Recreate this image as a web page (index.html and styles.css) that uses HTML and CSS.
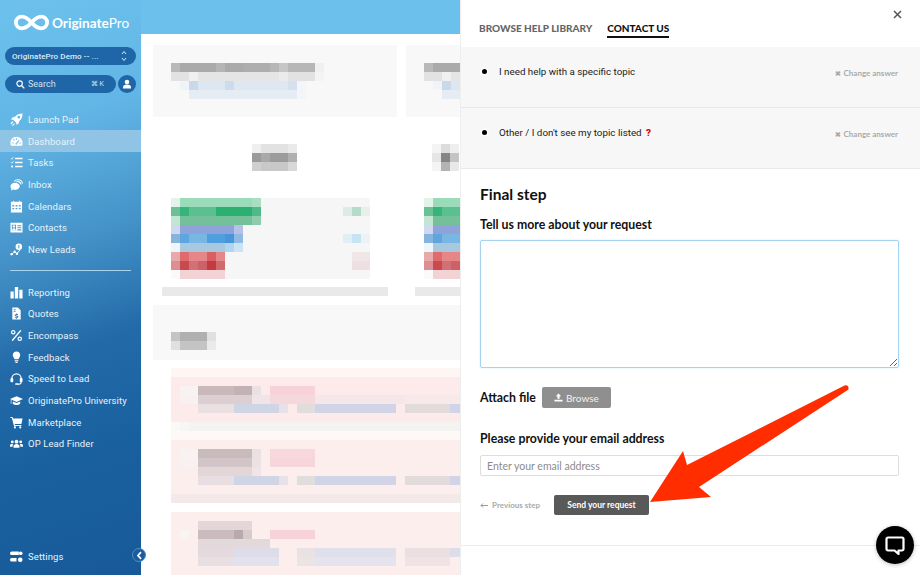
FILE: index.html
```html
<!DOCTYPE html>
<html lang="en">
<head>
<meta charset="utf-8">
<title>OriginatePro</title>
<link rel="stylesheet" href="styles.css">
</head>
<body>
<div class="app">
  <aside class="sidebar">
    <div class="logo">
      <svg class="logo-mark" viewBox="0 0 38 17"><path d="M19 8.500C16 5 13 2.500 9 2.500a6 6 0 0 0 0 12c4 0 7-2.500 10-6s6-6 10-6a6 6 0 0 1 0 12c-4 0-7-2.500-10-6z" fill="none" stroke="#fff" stroke-width="4"/></svg>
      <span class="logo-text">Originate<span class="logo-pro">Pro</span></span>
    </div>
    <div class="account">
      <span>OriginatePro Demo -- ...</span>
      <svg class="updown" viewBox="0 0 6 12"><path d="M1 4l2-2.500L5 4M1 8l2 2.500L5 8" fill="none" stroke="#dcecf7" stroke-width="1"/></svg>
    </div>
    <div class="search-row">
      <div class="search">
        <svg class="search-icon" viewBox="0 0 10 10"><circle cx="4" cy="4" r="3" fill="none" stroke="#fff" stroke-width="1.300"/><path d="M6.300 6.300L9.300 9.300" stroke="#fff" stroke-width="1.500"/></svg>
        <span class="search-label">Search</span>
        <span class="search-key">⌘ K</span>
      </div>
      <div class="avatar"><svg viewBox="0 0 10 10"><circle cx="5" cy="3" r="2.300" fill="#fff"/><path d="M1 9.500V8c0-1.500 1.500-2.500 4-2.500S9 6.500 9 8v1.500z" fill="#fff"/></svg></div>
    </div>
    <nav class="nav">
      <a class="nav-item"><svg viewBox="0 0 14 14"><path d="M13.500.5c-3.500 0-6 1-8 3.500L3 4.500 1 7l2.500.3 3.200 3.200L7 13l2.500-2 .5-2.500c2.500-2 3.500-4.500 3.500-8zM9.500 3a1.500 1.500 0 1 1 0 3 1.500 1.500 0 0 1 0-3z"/><path d="M.5 11l2.500-2 .8.8-2.500 2.500zM2 13.500L4.500 11l.8.8-2.500 2.200z"/></svg><span>Launch Pad</span></a>
      <a class="nav-item active"><svg viewBox="0 0 14 14"><path fill-rule="evenodd" d="M7 2C3 2 .5 5 .5 8.500c0 1 .2 2 .6 3h11.800c.4-1 .6-2 .6-3C13.500 5 11 2 7 2zM6.400 3.500h1.200v2H6.400zM3 5l1-1 1.300 1.500-.9.800zM2 8h2v1.200H2zM10 8h2v1.200h-2zM9.500 5.200L10.300 6 7.800 9.500a1 1 0 1 1-1.400-1z"/></svg><span>Dashboard</span></a>
      <a class="nav-item"><svg viewBox="0 0 14 14"><path d="M5.500 2h8v1.500h-8zM5.500 6.200h8v1.500h-8zM5.500 10.500h8V12h-8z"/><path d="M1 2.500l1 1L3.800 1.300" fill="none" stroke="#fff" stroke-width=".9"/><path d="M1 6.800l1 1L3.800 5.600" fill="none" stroke="#fff" stroke-width=".9"/><circle cx="2.200" cy="11.300" r="1.200"/></svg><span>Tasks</span></a>
      <a class="nav-item"><svg viewBox="0 0 14 14"><path d="M5.500 5C2.700 5 .5 6.700.5 9c0 1 .4 1.800 1 2.500L1 13.500l2.600-1c.6.200 1.200.3 1.900.3 2.800 0 5-1.700 5-3.800S8.300 5 5.500 5z"/><path d="M4.500 3.600C5.500 2.500 7 2 8.500 2c2.500 0 4.500 1.700 5 4M6.800 4c2.500-.5 4.500 1 5 3" fill="none" stroke="#fff" stroke-width="1.100"/></svg><span>Inbox</span></a>
      <a class="nav-item"><svg viewBox="0 0 14 14"><path fill-rule="evenodd" d="M1 2h2.500V.8h1V2h5V.8h1V2H13v11.500H1zM2.500 5.500v1.500h2V5.500zM6 5.500v1.500h2V5.500zM9.500 5.500v1.500h2V5.500zM2.500 8.500V10h2V8.500zM6 8.500V10h2V8.500zM9.500 8.500V10h2V8.500z"/></svg><span>Calendars</span></a>
      <a class="nav-item"><svg viewBox="0 0 14 14"><path fill-rule="evenodd" d="M.5 2h13v10.500H.5zM2 4v6h4.500V4zM8 4.500v1.200h4.200V4.500zM8 6.700v1.200h4.200V6.700zM8 9v1.200h4.200V9z"/><circle cx="4.200" cy="5.800" r="1.300"/><path d="M2.300 10c0-1.500.8-2.200 1.900-2.200S6.200 8.500 6.200 10z"/></svg><span>Contacts</span></a>
      <a class="nav-item"><svg viewBox="0 0 14 14"><circle cx="9.500" cy="4" r="3.500"/><path d="M9.500 2.200v3.600" stroke="#3f92c9" stroke-width="1"/><circle cx="1.800" cy="12" r="1.300"/><circle cx="5" cy="9.500" r="1.300"/><circle cx="7.500" cy="11.500" r="1.300"/><path d="M1.800 12L5 9.500l2.500 2L11 7" fill="none" stroke="#fff" stroke-width="1"/></svg><span>New Leads</span></a>
      <div class="nav-rule"></div>
      <a class="nav-item"><svg viewBox="0 0 14 14"><path d="M.5 6h3.500v7.500H.5zM5.200 1h3.600v12.500H5.200zM10 4h3.500v9.500H10z"/></svg><span>Reporting</span></a>
      <a class="nav-item"><svg viewBox="0 0 14 14"><path fill-rule="evenodd" d="M2.500.5h6l3 3v10h-9zM4 2.500v1h2v-1zM4 4.500v1h2v-1zM6.500 7v.7c-1 .2-1.500.7-1.500 1.300 0 1.500 2.500 1 2.500 1.700 0 .5-1.500.4-2.200 0v1c.4.200.8.300 1.200.3v.7h1V12c1-.2 1.500-.7 1.500-1.400 0-1.500-2.500-1.100-2.500-1.700 0-.4 1.200-.4 2 0v-1c-.3-.2-.7-.2-1-.3V7z"/></svg><span>Quotes</span></a>
      <a class="nav-item"><svg viewBox="0 0 14 14"><path d="M11 1l1.300 1L3 13l-1.300-1z"/><path fill-rule="evenodd" d="M3.500 1a2.500 2.500 0 1 1 0 5 2.500 2.500 0 0 1 0-5zm0 1.300a1.200 1.200 0 1 0 0 2.400 1.200 1.200 0 0 0 0-2.400zM10.500 8a2.500 2.500 0 1 1 0 5 2.500 2.500 0 0 1 0-5zm0 1.300a1.200 1.200 0 1 0 0 2.400 1.200 1.200 0 0 0 0-2.400z"/></svg><span>Encompass</span></a>
      <a class="nav-item"><svg viewBox="0 0 14 14"><path d="M7 .5c-2.500 0-4 1.800-4 3.800 0 2 1.500 2.700 1.800 4.700h4.400C9.500 7 11 6.300 11 4.300 11 2.300 9.500.5 7 .5zM5 10h4v1H5zM5.500 11.700h3l-.7 1.300H6.200z"/></svg><span>Feedback</span></a>
      <a class="nav-item"><svg viewBox="0 0 14 14"><path d="M2 8.500V7a5 5 0 0 1 10 0v4c0 1.300-1 2-2 2H7.500" fill="none" stroke="#fff" stroke-width="1.300"/><rect x=".5" y="6.500" width="3" height="4.500" rx="1"/><rect x="10.500" y="6.500" width="3" height="4.500" rx="1"/><rect x="5.500" y="12" width="3" height="1.800" rx=".9"/></svg><span>Speed to Lead</span></a>
      <a class="nav-item"><svg viewBox="0 0 14 14"><path d="M7 2.500L0 5.500l7 3 7-3z"/><path d="M3 8v2.500c1 1 2.500 1.300 4 1.300s3-.3 4-1.300V8L7 9.700zM.8 6v4.500h.7V6.300z"/></svg><span>OriginatePro University</span></a>
      <a class="nav-item"><svg viewBox="0 0 14 14"><path d="M.5 1.200h2.300l.5 1.600H13.500l-1.200 5.700H5l.3 1.200h7v1H4.300L2 2.200H.5z"/><circle cx="5.300" cy="12.300" r="1.200"/><circle cx="11" cy="12.300" r="1.200"/></svg><span>Marketplace</span></a>
      <a class="nav-item"><svg viewBox="0 0 14 14"><circle cx="7" cy="5" r="2"/><circle cx="2.500" cy="5.300" r="1.500"/><circle cx="11.500" cy="5.300" r="1.500"/><path d="M3.800 11.500V10c0-1.500 1.300-2.500 3.200-2.500s3.200 1 3.200 2.500v1.500zM0 10.500V9c0-1 1-1.500 2.500-1.500.4 0 .7 0 1 .1-.5.600-.7 1.300-.7 1.900v1zM14 10.500V9c0-1-1-1.500-2.500-1.500-.4 0-.7 0-1 .1.500.6.700 1.300.7 1.900v1z"/></svg><span>OP Lead Finder</span></a>
    </nav>
    <a class="nav-item settings"><svg viewBox="0 0 14 14"><path d="M2 1.500h7.500v4H2a2 2 0 0 1 0-4zM2 8.500h5v4H2a2 2 0 0 1 0-4z"/><circle cx="11.500" cy="3.500" r="2"/><circle cx="11" cy="10.500" r="2.500"/></svg><span>Settings</span></a>
  </aside>

  <main class="main">
    <div class="topbar"></div>
    <svg class="blurred" viewBox="141 34 319 541">
      <defs>
        <g id="chart">
          <rect class="card-head" x="153" y="45" width="244" fill="#f8f8f8"/>
          <rect class="chart-bg" x="171" y="198" width="199" fill="#f6f6f6"/>
          <rect x="343" y="207" width="9" fill="#dcece4"/><rect x="352" y="207" width="9" fill="#b4dcc8"/><rect x="361" y="207" width="9" fill="#e8f0ec"/>
          <rect x="343" y="234" width="9" fill="#e0eef6"/><rect x="352" y="234" width="9" fill="#c8e4f2"/><rect x="361" y="234" width="9" fill="#ecf2f6"/>
          <rect x="352" y="252" width="18" fill="#f0e6e8"/><rect x="352" y="261" width="18" fill="#eee0e2"/>
          <rect x="171" y="198" width="9" fill="#e2f3ea"/><rect x="180" y="198" width="72" fill="#9adcb9"/><rect x="252" y="198" width="9" fill="#a8dfc2"/>
          <rect x="171" y="207" width="9" fill="#6cc096"/><rect x="180" y="207" width="9" fill="#36b47a"/><rect x="189" y="207" width="27" fill="#5bbf90"/><rect x="216" y="207" width="36" fill="#2bb071"/><rect x="252" y="207" width="9" fill="#4fba88"/>
          <rect x="171" y="216" width="9" fill="#c3e5d3"/><rect x="180" y="216" width="72" fill="#74c09b"/><rect x="252" y="216" width="9" fill="#8fcbad"/>
          <rect x="171" y="225" width="9" fill="#cfd8f1"/><rect x="180" y="225" width="54" fill="#8ea3d9"/><rect x="234" y="225" width="9" fill="#b5c1e7"/>
          <rect x="171" y="234" width="9" fill="#86b4dc"/><rect x="180" y="234" width="9" fill="#5ea6de"/><rect x="189" y="234" width="18" fill="#78b7e3"/><rect x="207" y="234" width="18" fill="#4f9fdf"/><rect x="225" y="234" width="9" fill="#4795db"/><rect x="234" y="234" width="9" fill="#8fbbe2"/>
          <rect x="171" y="243" width="9" fill="#edf6fa"/><rect x="180" y="243" width="45" fill="#a8c8e0"/><rect x="225" y="243" width="9" fill="#aed7ee"/><rect x="234" y="243" width="9" fill="#cce3f2"/>
          <rect x="171" y="252" width="9" fill="#e8a9ab"/><rect x="180" y="252" width="9" fill="#df6b6d"/><rect x="189" y="252" width="18" fill="#e58789"/><rect x="207" y="252" width="9" fill="#da5f62"/><rect x="216" y="252" width="9" fill="#e58789"/>
          <rect x="171" y="261" width="9" fill="#dc8f92"/><rect x="180" y="261" width="9" fill="#c8494e"/><rect x="189" y="261" width="9" fill="#d17176"/><rect x="198" y="261" width="9" fill="#cc6167"/><rect x="207" y="261" width="9" fill="#c43a3f"/><rect x="216" y="261" width="9" fill="#cf6a6f"/>
          <rect x="171" y="270" width="9" fill="#fafafa"/><rect x="180" y="270" width="45" fill="#f2d2d4"/>
          <rect x="162" y="287" width="226" fill="#e9e9e9"/>
          <rect x="171" y="63" width="9" fill="#b9b9b9"/><rect x="180" y="63" width="36" fill="#aaa"/><rect x="216" y="63" width="9" fill="#b5b5b5"/><rect x="225" y="63" width="18" fill="#aaa"/><rect x="243" y="63" width="27" fill="#aeaeae"/><rect x="270" y="63" width="9" fill="#b7b7b7"/><rect x="279" y="63" width="9" fill="#c6c6c6"/><rect x="288" y="63" width="27" fill="#b7b7b7"/><rect x="315" y="63" width="9" fill="#f0f0f0"/>
          <rect x="171" y="72" width="18" fill="#e2e2e2"/><rect x="189" y="72" width="9" fill="#f0f0f0"/><rect x="198" y="72" width="81" fill="#e5e5e5"/><rect x="279" y="72" width="9" fill="#ebebeb"/><rect x="288" y="72" width="27" fill="#e2e2e2"/><rect x="315" y="72" width="9" fill="#f4f4f4"/>
          <rect x="180" y="81" width="9" fill="#f0f3f8"/><rect x="189" y="81" width="9" fill="#c9d9ea"/><rect x="198" y="81" width="27" fill="#dde7f2"/><rect x="225" y="81" width="9" fill="#cddcec"/><rect x="234" y="81" width="54" fill="#dfe8f2"/><rect x="288" y="81" width="9" fill="#d5e1ee"/><rect x="297" y="81" width="9" fill="#f2f5f9"/>
          <rect x="189" y="90" width="108" fill="#e5ecf3"/><rect x="297" y="90" width="9" fill="#f3f5f8"/>
        </g>
      </defs>
      <g class="smooth">
        <use href="#chart"/>
        <use href="#chart" x="253"/>
        <rect x="252" y="144" width="9" fill="#efefef"/><rect x="261" y="144" width="27" fill="#e2e2e2"/><rect x="288" y="144" width="9" fill="#eaeaea"/>
        <rect x="252" y="153" width="9" fill="#9a9a9a"/><rect x="261" y="153" width="9" fill="#a9a9a9"/><rect x="270" y="153" width="18" fill="#9c9c9c"/><rect x="288" y="153" width="9" fill="#b0b0b0"/>
        <rect x="252" y="162" width="9" fill="#cfcfcf"/><rect x="261" y="162" width="27" fill="#c8c8c8"/><rect x="288" y="162" width="9" fill="#d8d8d8"/>
        <rect x="432" y="144" width="9" fill="#f4f4f4"/><rect x="441" y="144" width="9" fill="#dcdcdc"/><rect x="450" y="144" width="9" fill="#eee"/>
        <rect x="432" y="153" width="9" fill="#e6e6e6"/><rect x="441" y="153" width="9" fill="#858585"/><rect x="450" y="153" width="9" fill="#c4c4c4"/>
        <rect x="432" y="162" width="9" fill="#f4f4f4"/><rect x="441" y="162" width="9" fill="#b3b3b3"/><rect x="450" y="162" width="9" fill="#e8e8e8"/>

        <rect class="list-head" x="153" y="305" width="307" fill="#f8f8f8"/>
        <rect x="171" y="332" width="9" fill="#c4c4c4"/><rect x="180" y="332" width="27" fill="#b0b0b0"/><rect x="207" y="332" width="9" fill="#e0e0e0"/>
        <rect x="171" y="341" width="9" fill="#e0e0e0"/><rect x="180" y="341" width="27" fill="#c4c4c4"/><rect x="207" y="341" width="9" fill="#eaeaea"/>

        <rect x="171" y="368" width="289" fill="#fef6f5"/>
        <rect class="tall" x="171" y="377" width="289" fill="#fdeaea"/>
        <rect x="180" y="386" width="18" fill="#f8f2f2"/><rect x="180" y="395" width="18" fill="#f8f0f1"/>
        <rect x="198" y="386" width="36" fill="#c9b9bb"/><rect x="234" y="386" width="18" fill="#c2b2b5"/><rect x="252" y="386" width="9" fill="#ebe1e3"/><rect x="270" y="386" width="45" fill="#f7d3d7"/>
        <rect x="198" y="395" width="54" fill="#dccfd1"/><rect x="252" y="395" width="18" fill="#efe4e6"/><rect x="270" y="395" width="45" fill="#f5d8dc"/><rect x="315" y="395" width="90" fill="#f4e6e9"/><rect x="405" y="395" width="55" fill="#f7e8ea"/>
        <rect x="198" y="404" width="36" fill="#eadfe1"/><rect x="234" y="404" width="45" fill="#d0d5e6"/><rect x="279" y="404" width="9" fill="#e8e2e8"/><rect x="297" y="404" width="18" fill="#e2dddd"/><rect x="315" y="404" width="81" fill="#d0d4e6"/><rect x="405" y="404" width="45" fill="#e3dadc"/><rect x="450" y="404" width="10" fill="#d0d4e6"/>
        <rect x="171" y="422" width="9" fill="#fbf9f8"/><rect x="180" y="422" width="9" fill="#f7f6f4"/><rect x="189" y="422" width="271" fill="#f3f3f1"/>
        <rect x="171" y="431" width="289" fill="#fef8f7"/>

        <rect class="tall2" x="171" y="440" width="289" fill="#fdeeee"/>
        <rect x="180" y="449" width="18" fill="#f8f2f2"/><rect x="180" y="458" width="18" fill="#f8f0f1"/>
        <rect x="198" y="449" width="54" fill="#c9babc"/><rect x="252" y="449" width="9" fill="#ebe1e3"/><rect x="270" y="449" width="45" fill="#f8d8dc"/>
        <rect x="198" y="458" width="54" fill="#d2c5c8"/><rect x="252" y="458" width="9" fill="#ece2e4"/><rect x="270" y="458" width="45" fill="#f6d6da"/>
        <rect x="198" y="467" width="54" fill="#e2d6d7"/><rect x="252" y="467" width="9" fill="#f0e5e6"/>
        <rect x="198" y="476" width="36" fill="#e8dee1"/><rect x="234" y="476" width="45" fill="#d0d5e6"/><rect x="279" y="476" width="9" fill="#e8e2e8"/><rect x="297" y="476" width="18" fill="#e2dddd"/><rect x="315" y="476" width="81" fill="#d0d4e6"/><rect x="405" y="476" width="45" fill="#e3dadc"/><rect x="450" y="476" width="10" fill="#d0d4e6"/>
        <rect x="171" y="494" width="289" fill="#f3e9e9"/>

        <rect class="tall3" x="171" y="512" width="289" fill="#fdeeee"/>
        <rect x="198" y="521" width="54" fill="#e3d6d8"/>
        <rect x="180" y="530" width="9" fill="#f9f4f4"/><rect x="198" y="530" width="36" fill="#c9bbbe"/><rect x="234" y="530" width="9" fill="#b8a9ac"/><rect x="243" y="530" width="9" fill="#d7cbce"/><rect x="270" y="530" width="45" fill="#f7d3d8"/>
        <rect x="198" y="539" width="72" fill="#e4d9da"/>
        <rect x="198" y="548" width="36" fill="#e4d9dc"/><rect x="234" y="548" width="45" fill="#dcdde9"/><rect x="297" y="548" width="18" fill="#e8e2e2"/><rect x="315" y="548" width="81" fill="#e0e0ec"/><rect x="405" y="548" width="45" fill="#ecdfe1"/><rect x="450" y="548" width="10" fill="#dcdde9"/>
        <rect x="198" y="557" width="36" fill="#e8dfe2"/><rect x="234" y="557" width="45" fill="#e2e2ee"/><rect x="297" y="557" width="18" fill="#ece4e4"/><rect x="315" y="557" width="81" fill="#e5e4ee"/><rect x="405" y="557" width="45" fill="#efe3e5"/>
      </g>
    </svg>
    <button class="collapse"><svg viewBox="0 0 8 12"><path d="M6 1.500L2 6l4 4.500" fill="none" stroke="#fff" stroke-width="2.400"/></svg></button>
  </main>

  <section class="panel">
    <svg class="close" viewBox="0 0 9 9"><path d="M1 1l7 7M8 1L1 8" stroke="#555" stroke-width="1.500"/></svg>
    <div class="tabs">
      <span class="tab">BROWSE HELP LIBRARY</span>
      <span class="tab current">CONTACT US</span>
    </div>
    <div class="answer">
      <span class="dot"></span>
      <span class="answer-text">I need help with a specific topic</span>
      <span class="change"><b>✖</b> Change answer</span>
    </div>
    <div class="answer">
      <span class="dot"></span>
      <span class="answer-text">Other / I don't see my topic listed <span class="qm">?</span></span>
      <span class="change"><b>✖</b> Change answer</span>
    </div>
    <form class="form">
      <h2 class="step">Final step</h2>
      <label class="label">Tell us more about your request</label>
      <textarea class="request"></textarea>
      <div class="attach">
        <span class="label flat">Attach file</span>
        <span class="browse"><svg viewBox="0 0 10 10"><path d="M5 .5L8 3.500H6.200V6.500H3.800V3.500H2zM.5 7.500h9v2h-9z" fill="#fff"/></svg>Browse</span>
      </div>
      <label class="label email-label">Please provide your email address</label>
      <input class="email" placeholder="Enter your email address">
      <div class="actions">
        <span class="prev"><svg viewBox="0 0 8 5"><path d="M8 2.500H1M3 .5L1 2.500l2 2" fill="none" stroke="#999" stroke-width="1"/></svg>Previous step</span>
        <span class="send">Send your request</span>
      </div>
    </form>
    <div class="panel-foot"></div>
  </section>

  <svg class="arrow" viewBox="0 0 920 575"><path d="M650 502L683 451 687 465 844.500 385.500Q849 384.500 848.500 389.500L699 487 711 497z" fill="#ff2d00"/></svg>
  <div class="chat"><svg viewBox="0 0 20 20"><path d="M3 2.500h14a1.500 1.500 0 0 1 1.500 1.500v10a1.500 1.500 0 0 1-1.500 1.500h-3.500V19l-4-3.500H3A1.500 1.500 0 0 1 1.500 14V4A1.500 1.500 0 0 1 3 2.500z" fill="none" stroke="#fff" stroke-width="2.200" stroke-linejoin="round"/></svg></div>
</div>
</body>
</html>
```

FILE: styles.css
```css
* { box-sizing: border-box; }
html, body { margin: 0; height: 100%; overflow: hidden; background: #fff; }
body { font-family: "Lato", "Liberation Sans", sans-serif; }

.app { position: relative; display: flex; width: 920px; height: 575px; overflow: hidden; }

/* Sidebar */
.sidebar {
  width: 141px;
  flex: none;
  display: flex;
  flex-direction: column;
  padding: 14px 0 8px;
  color: #e8f3fa;
  font-family: "Roboto", "Liberation Sans", sans-serif;
  background: linear-gradient(162deg, #6cc1ec 0%, #62b6e6 22%, #4593c9 42%, #226aa8 60%, #19609f 78%, #185a99 100%);
}
.logo { display: flex; align-items: center; gap: 2px; height: 17px; margin-left: 13px; }
.logo-mark { width: 37px; height: 17px; flex: none; }
.logo-text { font-family: "Lato", sans-serif; font-size: 13.600px; font-weight: 700; color: #fff; }
.logo-pro { font-weight: 400; }

.account {
  display: flex;
  align-items: center;
  justify-content: space-between;
  height: 18px;
  margin: 16px 5px 0;
  padding: 0 9px 0 7px;
  border-radius: 9px;
  background: #1f66a8;
  font-size: 8px;
  font-weight: 500;
  letter-spacing: .1px;
  color: #dcecf7;
}
.updown { width: 6px; height: 12px; }

.search-row { display: flex; align-items: center; gap: 2px; margin: 10px 5px 0; }
.search {
  flex: 1;
  display: flex;
  align-items: center;
  height: 18px;
  padding: 0 12px 0 11px;
  border-radius: 9px;
  background: #1f66a8;
  font-size: 9px;
  color: #cfe2f1;
}
.search-icon { width: 9px; height: 9px; margin-right: 3px; }
.search-label { flex: 1; }
.search-key { font-size: 7px; }
.avatar { width: 18px; height: 18px; padding: 4px; border-radius: 50%; background: #1f66a8; }
.avatar svg { display: block; }

.nav { display: flex; flex-direction: column; margin-top: 15.500px; }
.nav-item {
  display: flex;
  align-items: center;
  gap: 5px;
  height: 21.7px;
  padding-left: 10px;
  font-size: 9.500px;
  letter-spacing: .1px;
  color: #e8f3fa;
  white-space: nowrap;
}
.nav-item svg { width: 13px; height: 13px; flex: none; fill: #fff; }
.nav-item.active { background: #8fc4e4; }
.nav-rule { height: 1px; margin: 10px 10px 10px; background: #a9d3ec; }
.settings { margin-top: auto; }

/* Blurred dashboard */
.main { position: relative; width: 319px; flex: none; display: flex; flex-direction: column; }
.topbar { height: 34px; flex: none; background: #6cc1ec; }
.blurred { display: block; width: 319px; height: 541px; flex: none; background: #fff; }
.smooth { filter: blur(.6px); }
.blurred rect { height: 9px; }
.blurred .card-head { height: 72px; }
.blurred .chart-bg { height: 81px; }
.blurred .list-head { height: 55px; }
.blurred .tall { height: 45px; }
.blurred .tall2 { height: 54px; }
.blurred .tall3 { height: 63px; }

.collapse {
  position: absolute;
  left: -9px;
  top: 548px;
  width: 14px;
  height: 14px;
  padding: 1.500px 2.500px;
  border: 1px solid #4d8fc4;
  border-radius: 50%;
  background: #1c5c9c;
}
.collapse svg { display: block; width: 100%; height: 100%; }

/* Help panel */
.panel {
  position: relative;
  flex: 1;
  display: flex;
  flex-direction: column;
  background: #fff;
  border-left: 1px solid #eee;
  font-family: "Lato", "Liberation Sans", sans-serif;
  color: #1b1b1b;
}
.close { position: absolute; top: 10px; right: 18px; width: 9px; height: 9px; }
.tabs { display: flex; gap: 15px; height: 47px; padding: 22px 0 0 18px; }
.tab { height: 16px; font-size: 10px; font-weight: 900; color: #666; letter-spacing: 0; }
.tab.current { color: #111; border-bottom: 2px solid #111; }

.answer {
  display: flex;
  align-items: flex-start;
  height: 61px;
  padding: 19px 22px 0 21px;
  background: #f7f7f7;
  border-bottom: 1px solid #e9e9e9;
  font-family: "Roboto", sans-serif;
  font-size: 9.800px;
}
.dot {
  width: 5px;
  height: 5px;
  margin: 3px 12px 0 0;
  border-radius: 50%;
  background: #000;
  box-shadow: 0 0 0 1.500px #fff;
  flex: none;
}
.answer-text { flex: 1; }
.qm { margin-left: 2px; font-weight: 900; color: #e0000f; }
.change { font-family: "Lato", sans-serif; font-size: 8px; font-weight: 700; color: #aaa; padding-top: 2px; }
.change b { font-size: 7px; margin-right: 1px; }

.form { display: flex; flex-direction: column; padding: 0 21px 0 19px; height: 377px; border-bottom: 1px solid #ececec; }
.step { margin: 16px 0 0; font-size: 15.500px; line-height: 18px; font-weight: 700; color: #111; }
.label { display: block; margin-top: 14px; font-size: 12.300px; line-height: 15px; font-weight: 700; color: #111; }
.label.flat { margin: 0; }
.request {
  display: block;
  width: 100%;
  height: 128px;
  margin-top: 8px;
  border: 1px solid #a7d3f3;
  border-radius: 2px;
  box-shadow: 0 0 2px #cfe7f8;
  outline: none;
  background: #fff;
}
.attach { display: flex; align-items: center; gap: 6px; margin-top: 19px; height: 21px; }
.browse {
  display: flex;
  align-items: center;
  justify-content: center;
  gap: 3px;
  width: 69px;
  height: 21px;
  border-radius: 2px;
  background: #8f8f8f;
  color: #f2f2f2;
  font-size: 10px;
}
.browse svg { width: 9px; height: 9px; }
.email-label { margin-top: 23px; }
.email {
  display: block;
  width: 100%;
  height: 21px;
  margin-top: 9px;
  padding: 0 6px;
  border: 1px solid #ddd;
  border-radius: 2px;
  font: 10.500px "Lato", sans-serif;
  outline: none;
}
.email::placeholder { color: #8c8c8c; opacity: 1; }
.actions { display: flex; align-items: center; gap: 15px; margin-top: 19px; }
.prev { display: flex; align-items: center; gap: 4px; width: 59px; font-size: 8px; font-weight: 700; color: #aaa; white-space: nowrap; }
.prev svg { width: 8px; height: 5px; flex: none; }
.send {
  display: flex;
  align-items: center;
  justify-content: center;
  width: 95px;
  height: 20px;
  border-radius: 2px;
  background: #595959;
  color: #fff;
  font-size: 8.500px;
  font-weight: 700;
}
.panel-foot { flex: 1; }

/* Overlays */
.arrow { position: absolute; inset: 0; width: 920px; height: 575px; pointer-events: none; }
.chat {
  position: absolute;
  left: 876px;
  top: 526px;
  width: 38px;
  height: 38px;
  padding: 9px;
  border-radius: 50%;
  background: #000;
  box-shadow: 0 1px 4px rgba(0, 0, 0, .25);
}
.chat svg { display: block; }
```
